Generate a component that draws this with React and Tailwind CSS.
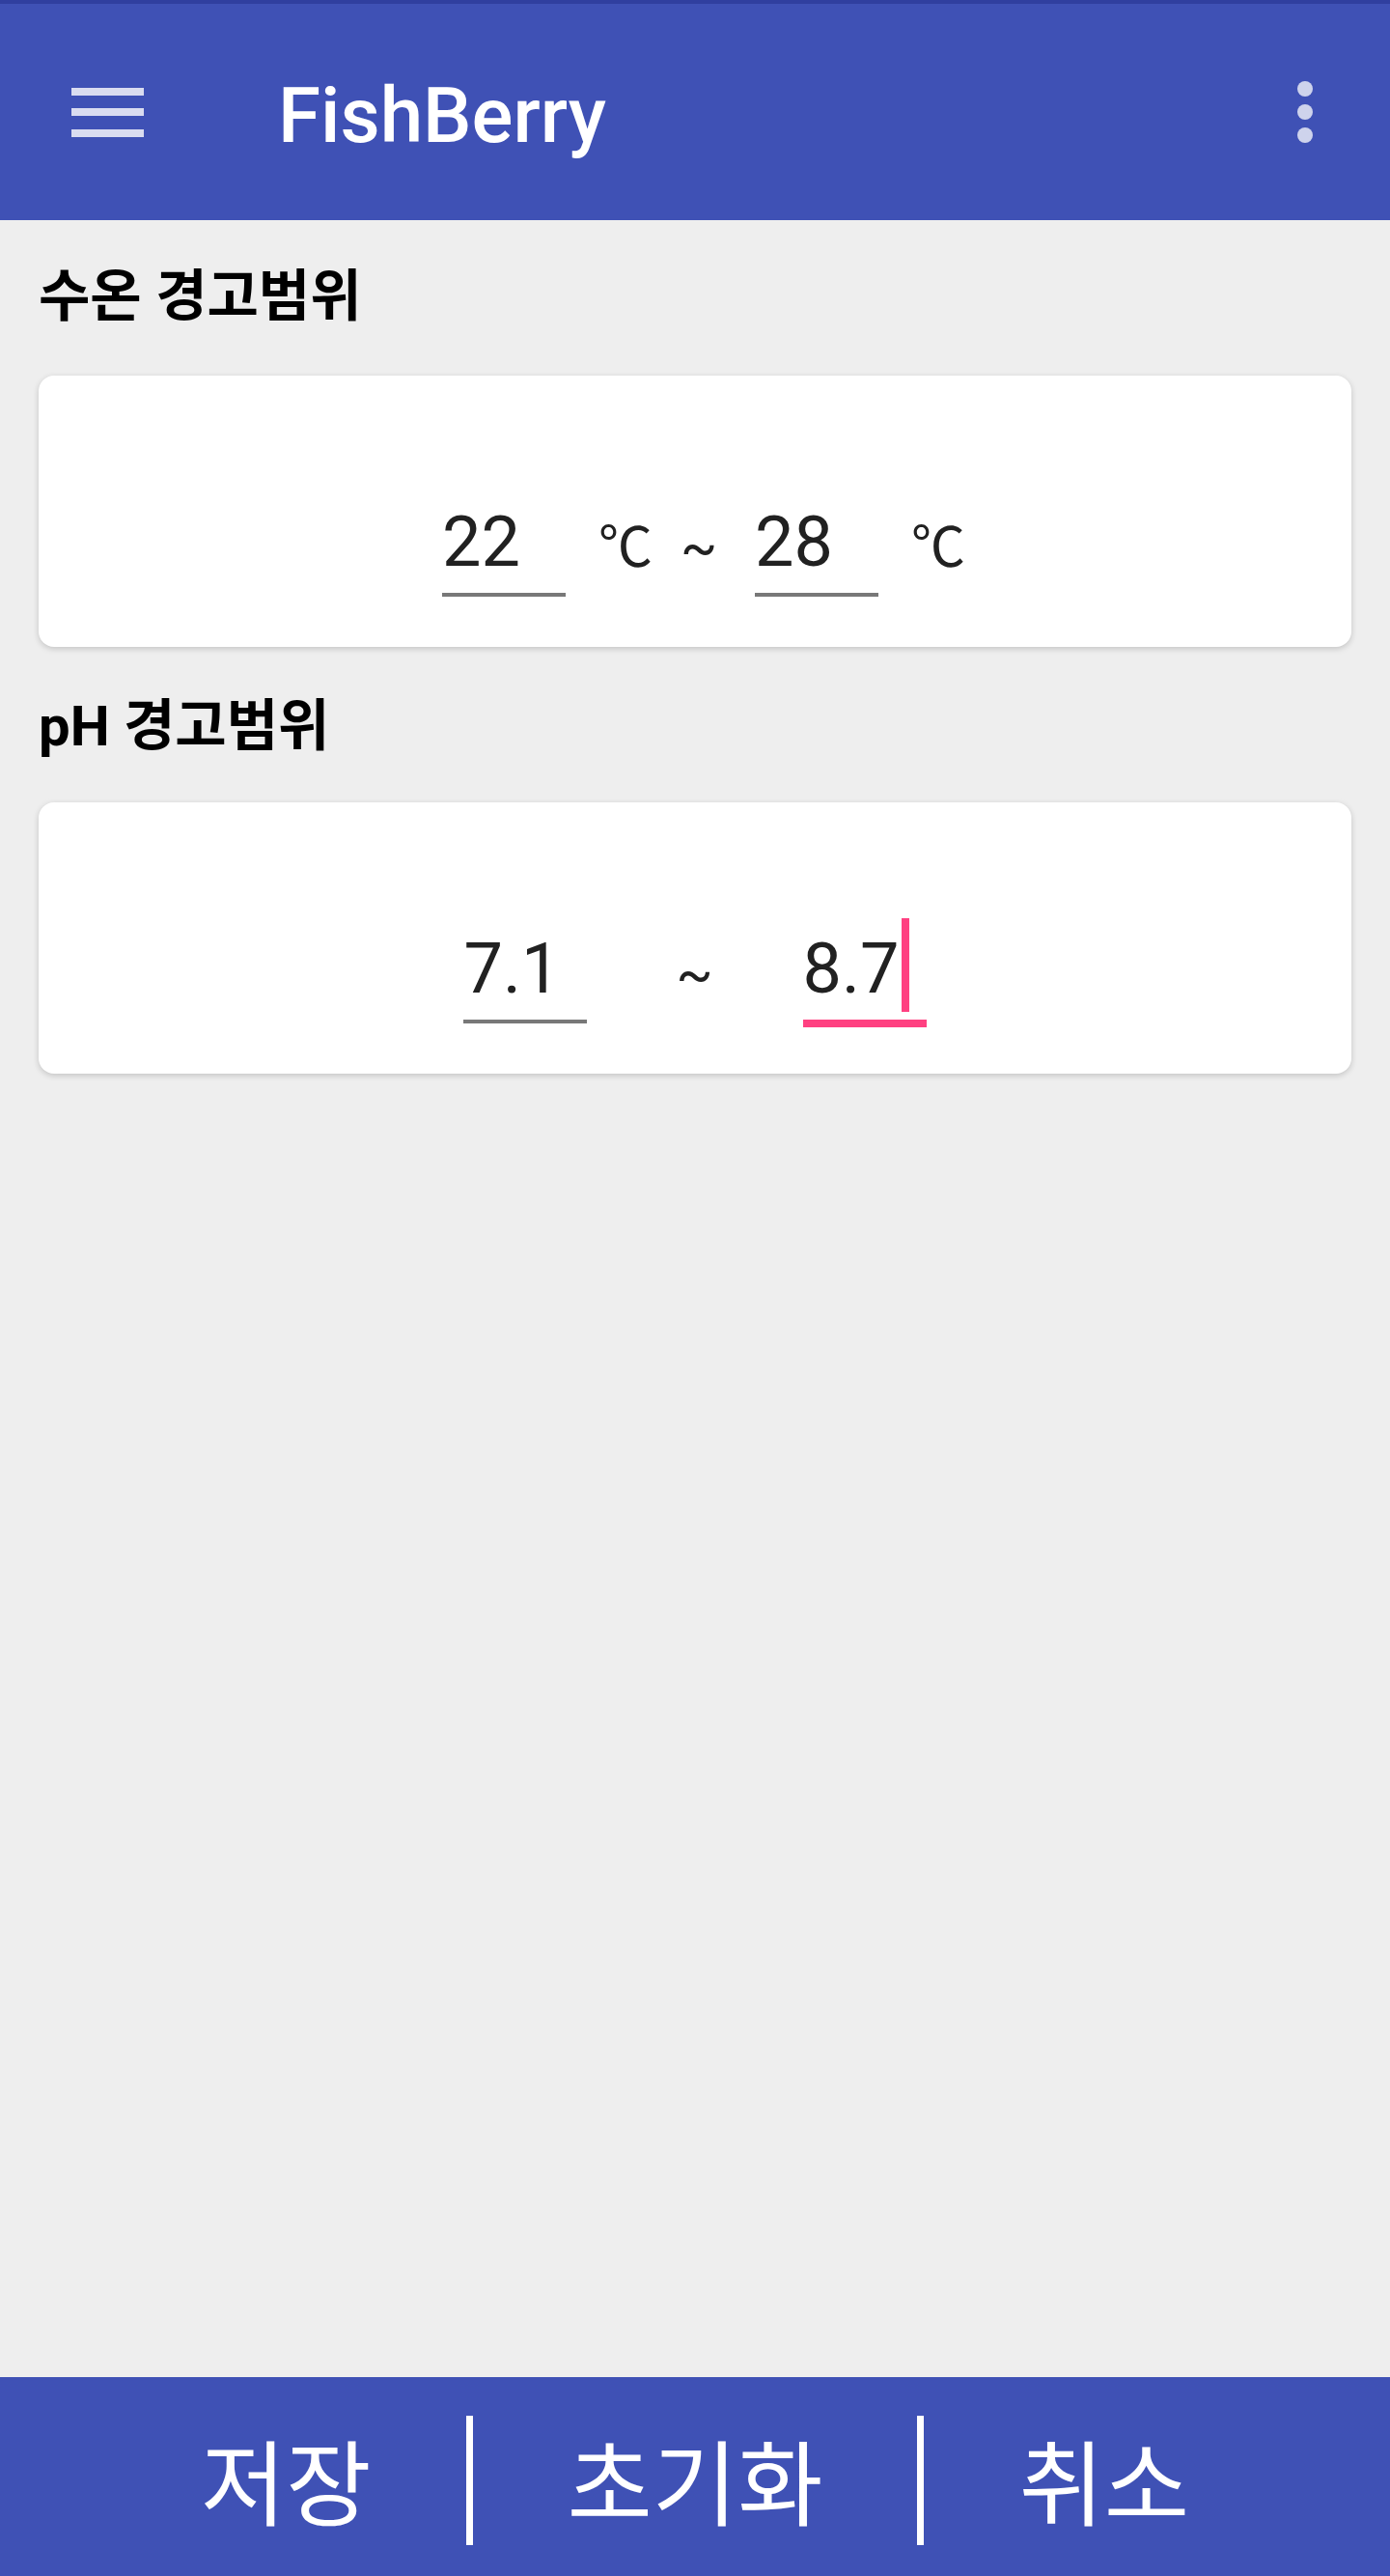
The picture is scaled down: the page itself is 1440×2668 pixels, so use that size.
import React from "react";

const FONT = "font-['Roboto','Noto_Sans_CJK_KR',sans-serif]";

function Field({ value, focused }) {
  return (
    <div className="w-[128px]">
      <div className="text-[72px] leading-[84px] text-[#212121] pb-[10px] whitespace-nowrap">
        {focused ? (
          <span className="relative">
            {value}
            <span className="absolute left-full top-[-10px] ml-[3px] w-[8px] h-[97px] bg-[#FF4081]" />
          </span>
        ) : (
          value
        )}
      </div>
      <div className={focused ? "h-[8px] bg-[#FF4081]" : "h-[4px] bg-[#787878]"} />
    </div>
  );
}

function Unit({ children, className = "" }) {
  return <span className={`text-[56px] text-[#212121] ${className}`}>{children}</span>;
}

function Card({ children }) {
  return (
    <div className="mx-[40px] h-[281px] rounded-[16px] bg-white shadow-[0_2px_6px_rgba(0,0,0,0.18)] pt-[131px]">
      {children}
    </div>
  );
}

export default function App() {
  return (
    <div className={`${FONT} flex flex-col h-[2668px] bg-[#EEEEEE]`}>
      {/* toolbar */}
      <div className="bg-[#3F51B5]">
        <div className="h-[4px] bg-[#303F9F]" />
        <div className="h-[224px] flex items-center">
          <div className="w-[288px] pl-[74px] flex items-center">
            <svg width="75" height="51" viewBox="0 0 75 51" className="text-white/80" fill="currentColor">
              <rect x="0" y="0" width="75" height="8" />
              <rect x="0" y="21" width="75" height="8" />
              <rect x="0" y="43" width="75" height="8" />
            </svg>
          </div>
          <div className="flex-1 pt-[8px] text-[80px] leading-[94px] font-medium text-white">FishBerry</div>
          <div className="pr-[80px] flex items-center">
            <svg width="16" height="64" viewBox="0 0 16 64" className="text-white/75" fill="currentColor">
              <circle cx="8" cy="8" r="8" />
              <circle cx="8" cy="32" r="8" />
              <circle cx="8" cy="56" r="8" />
            </svg>
          </div>
        </div>
      </div>

      {/* content */}
      <div className="flex-1">
        <div className="px-[40px] mt-[50px] text-[58px] leading-[58px] font-bold text-black">수온 경고범위</div>
        <div className="mt-[53px]">
          <Card>
            <div className="flex items-baseline justify-center pl-[18px]">
              <Field value="22" />
              <Unit className="ml-[34px]">℃</Unit>
              <Unit className="ml-[29px]">~</Unit>
              <div className="ml-[39px]">
                <Field value="28" />
              </div>
              <Unit className="ml-[34px]">℃</Unit>
            </div>
          </Card>
        </div>

        <div className="px-[40px] mt-[53px] text-[58px] leading-[58px] font-bold text-black">pH 경고범위</div>
        <div className="mt-[50px]">
          <Card>
            <div className="flex items-baseline justify-center">
              <Field value="7.1" />
              <Unit className="ml-[92px]">~</Unit>
              <div className="ml-[93px]">
                <Field value="8.7" focused />
              </div>
            </div>
          </Card>
        </div>
      </div>

      {/* bottom actions */}
      <div className="h-[206px] bg-[#3F51B5] flex items-center justify-center gap-[98px] text-white font-['Noto_Sans_CJK_KR',sans-serif] text-[96px] leading-none">
        <span className="mt-[4px]">저장</span>
        <span className="w-[7px] h-[134px] bg-white mt-[8px]" />
        <span className="mt-[4px]">초기화</span>
        <span className="w-[7px] h-[134px] bg-white mt-[8px]" />
        <span className="mt-[4px]">취소</span>
      </div>
    </div>
  );
}
